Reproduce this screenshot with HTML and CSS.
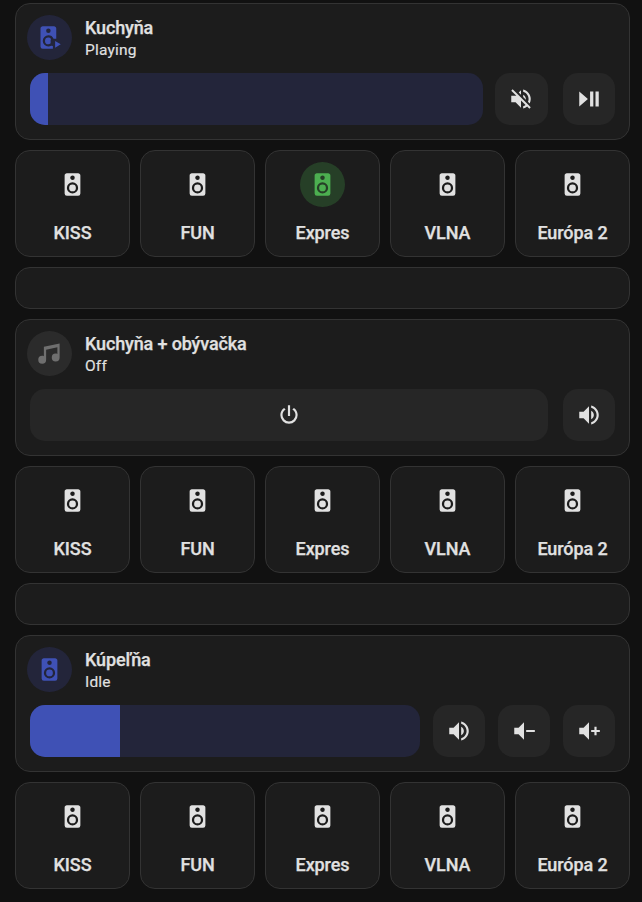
FILE: index.html
```html
<!DOCTYPE html>
<html lang="sk">
<head>
<meta charset="utf-8">
<title>Media</title>
<link rel="stylesheet" href="styles.css">
</head>
<body>
<svg class="defs" aria-hidden="true">
  <symbol id="speaker" viewBox="0 0 24 24"><path d="M12,12A3,3 0 0,0 9,15A3,3 0 0,0 12,18A3,3 0 0,0 15,15A3,3 0 0,0 12,12M12,20A5,5 0 0,1 7,15A5,5 0 0,1 12,10A5,5 0 0,1 17,15A5,5 0 0,1 12,20M12,4A2,2 0 0,1 14,6A2,2 0 0,1 12,8C10.89,8 10,7.1 10,6C10,4.89 10.89,4 12,4M17,2H7C5.89,2 5,2.89 5,4V20A2,2 0 0,0 7,22H17A2,2 0 0,0 19,20V4C19,2.89 18.1,2 17,2Z"/></symbol>
  <symbol id="speaker-play" viewBox="0 0 24 24"><path d="M11,12A3,3 0 0,0 8,15A3,3 0 0,0 11,18C11.7,18 12.4,17.7 13,17.2V14L13.5,13.4C12.9,12.5 12,12 11,12M11,20A5,5 0 0,1 6,15A5,5 0 0,1 11,10A5,5 0 0,1 15.6,13H18V4C18,2.89 17.1,2 16,2H6C4.89,2 4,2.89 4,4V20A2,2 0 0,0 6,22H15V19.5L13.6,19.3A5,5 0 0,1 11,20M11,4A2,2 0 0,1 13,6A2,2 0 0,1 11,8A2,2 0 0,1 9,6A2,2 0 0,1 11,4M17,15V21L22,18L17,15Z"/></symbol>
  <symbol id="music" viewBox="0 0 24 24"><path d="M21,3V15.5A3.5,3.5 0 0,1 17.5,19A3.5,3.5 0 0,1 14,15.5A3.5,3.5 0 0,1 17.5,12C18.04,12 18.55,12.12 19,12.34V6.47L9,8.6V17.5A3.5,3.5 0 0,1 5.5,21A3.5,3.5 0 0,1 2,17.5A3.5,3.5 0 0,1 5.5,14C6.04,14 6.55,14.12 7,14.34V6L21,3Z"/></symbol>
  <symbol id="volume" viewBox="0 0 24 24"><path d="M14,3.23V5.29C16.89,6.15 19,8.83 19,12C19,15.17 16.89,17.84 14,18.7V20.77C18,19.86 21,16.28 21,12C21,7.72 18,4.14 14,3.23M16.5,12C16.5,10.23 15.5,8.71 14,7.97V16C15.5,15.29 16.5,13.76 16.5,12M3,9V15H7L12,20V4L7,9H3Z"/></symbol>
  <symbol id="volume-off" viewBox="0 0 24 24"><path d="M12,4L9.91,6.09L12,8.18M4.27,3L3,4.27L7.73,9H3V15H7L12,20V13.27L16.25,17.53C15.58,18.04 14.83,18.46 14,18.7V20.77C15.38,20.45 16.63,19.82 17.68,18.96L19.73,21L21,19.73L12,10.73M19,12C19,12.94 18.8,13.82 18.46,14.64L19.97,16.15C20.62,14.91 21,13.5 21,12C21,7.72 18,4.14 14,3.23V5.29C16.89,6.15 19,8.83 19,12M16.5,12C16.5,10.23 15.5,8.71 14,7.97V10.18L16.45,12.63C16.5,12.43 16.5,12.21 16.5,12Z"/></symbol>
  <symbol id="volume-minus" viewBox="0 0 24 24"><path d="M3,9H7L12,4V20L7,15H3V9M14,11H22V13H14V11Z"/></symbol>
  <symbol id="volume-plus" viewBox="0 0 24 24"><path d="M3,9H7L12,4V20L7,15H3V9M14,11H17V8H19V11H22V13H19V16H17V13H14V11Z"/></symbol>
  <symbol id="play-pause" viewBox="0 0 24 24"><path d="M3,5V19L11,12M13,19H16V5H13M18,5V19H21V5"/></symbol>
  <symbol id="power" viewBox="0 0 24 24"><path d="M16.56,5.44L15.11,6.89C16.84,7.94 18,9.83 18,12A6,6 0 0,1 12,18A6,6 0 0,1 6,12C6,9.83 7.16,7.94 8.88,6.88L7.44,5.44C5.36,6.88 4,9.28 4,12A8,8 0 0,0 12,20A8,8 0 0,0 20,12C20,9.28 18.64,6.88 16.56,5.44M13,3H11V13H13"/></symbol>
</svg>
<main class="stack">
  <section class="card player">
    <header class="head">
      <span class="badge blue"><svg><use href="#speaker-play"/></svg></span>
      <div><h2 class="name">Kuchyňa</h2><p class="state">Playing</p></div>
    </header>
    <div class="controls">
      <div class="slider"><div class="fill" style="width:4%"></div></div>
      <button class="btn wide-gap"><svg><use href="#volume-off"/></svg></button>
      <button class="btn"><svg><use href="#play-pause"/></svg></button>
    </div>
  </section>
  <div class="stations">
    <div class="card station"><span class="badge"><svg><use href="#speaker"/></svg></span><span class="label">KISS</span></div>
    <div class="card station"><span class="badge"><svg><use href="#speaker"/></svg></span><span class="label">FUN</span></div>
    <div class="card station"><span class="badge green"><svg><use href="#speaker"/></svg></span><span class="label">Expres</span></div>
    <div class="card station"><span class="badge"><svg><use href="#speaker"/></svg></span><span class="label">VLNA</span></div>
    <div class="card station"><span class="badge"><svg><use href="#speaker"/></svg></span><span class="label">Európa 2</span></div>
  </div>
  <div class="card spacer"></div>
  <section class="card player">
    <header class="head">
      <span class="badge grey"><svg><use href="#music"/></svg></span>
      <div><h2 class="name">Kuchyňa + obývačka</h2><p class="state">Off</p></div>
    </header>
    <div class="controls off">
      <button class="btn power"><svg><use href="#power"/></svg></button>
      <button class="btn"><svg><use href="#volume"/></svg></button>
    </div>
  </section>
  <div class="stations">
    <div class="card station"><span class="badge"><svg><use href="#speaker"/></svg></span><span class="label">KISS</span></div>
    <div class="card station"><span class="badge"><svg><use href="#speaker"/></svg></span><span class="label">FUN</span></div>
    <div class="card station"><span class="badge"><svg><use href="#speaker"/></svg></span><span class="label">Expres</span></div>
    <div class="card station"><span class="badge"><svg><use href="#speaker"/></svg></span><span class="label">VLNA</span></div>
    <div class="card station"><span class="badge"><svg><use href="#speaker"/></svg></span><span class="label">Európa 2</span></div>
  </div>
  <div class="card spacer"></div>
  <section class="card player">
    <header class="head">
      <span class="badge blue"><svg><use href="#speaker"/></svg></span>
      <div><h2 class="name">Kúpeľňa</h2><p class="state">Idle</p></div>
    </header>
    <div class="controls idle">
      <div class="slider"><div class="fill" style="width:23.1%"></div></div>
      <button class="btn"><svg><use href="#volume"/></svg></button>
      <button class="btn"><svg><use href="#volume-minus"/></svg></button>
      <button class="btn"><svg><use href="#volume-plus"/></svg></button>
    </div>
  </section>
  <div class="stations">
    <div class="card station"><span class="badge"><svg><use href="#speaker"/></svg></span><span class="label">KISS</span></div>
    <div class="card station"><span class="badge"><svg><use href="#speaker"/></svg></span><span class="label">FUN</span></div>
    <div class="card station"><span class="badge"><svg><use href="#speaker"/></svg></span><span class="label">Expres</span></div>
    <div class="card station"><span class="badge"><svg><use href="#speaker"/></svg></span><span class="label">VLNA</span></div>
    <div class="card station"><span class="badge"><svg><use href="#speaker"/></svg></span><span class="label">Európa 2</span></div>
  </div>
</main>
</body>
</html>
```
FILE: styles.css
```css
* { box-sizing: border-box; }
body {
  margin: 0;
  background: #111111;
  color: #e1e1e1;
  font-family: Roboto, sans-serif;
}
.defs { display: none; }
.stack {
  display: flex;
  flex-direction: column;
  gap: 10px;
  padding: 3px 12px 0 15px;
}
.card {
  background: #1c1c1c;
  border: 1px solid #333333;
  border-radius: 15px;
}
.player {
  height: 137px;
  padding: 11px 14px 0 11px;
}
.head {
  display: flex;
  align-items: center;
  gap: 13px;
  height: 45px;
}
.badge {
  display: flex;
  align-items: center;
  justify-content: center;
  flex: none;
  width: 45px;
  height: 45px;
  border-radius: 50%;
}
.badge svg { width: 27px; height: 27px; fill: currentColor; }
.blue { background: #23253a; color: #3f51b5; }
.grey { background: #2b2b2b; color: #6f6f6f; }
.green { background: #263f27; color: #4caf50; }
.name {
  margin: 0;
  font-size: 18px;
  line-height: 23px;
  font-weight: 500;
  letter-spacing: -0.14px;
  -webkit-text-stroke: 0.25px currentColor;
}
.state {
  margin: 0 0 -1px;
  padding-top: 2px;
  font-size: 15.5px;
  line-height: 19px;
  letter-spacing: 0.2px;
  -webkit-text-stroke: 0.15px currentColor;
}
.controls {
  display: flex;
  gap: 15px;
  margin: 13px 0 0 3px;
}
.idle { gap: 13px; }
.slider {
  flex: 1;
  height: 52px;
  border-radius: 15px;
  background: #23253a;
  overflow: hidden;
}
.fill { height: 100%; background: #3f51b5; }
.btn {
  display: flex;
  align-items: center;
  justify-content: center;
  flex: none;
  width: 52px;
  height: 52px;
  padding: 0;
  border: 0;
  border-radius: 15px;
  background: #262626;
  color: #e1e1e1;
}
.btn svg { width: 26px; height: 26px; fill: currentColor; }
.wide-gap { margin-left: -3px; width: 53px; padding-right: 1px; }
.power { flex: 1; }
.stations {
  display: grid;
  grid-template-columns: repeat(5, 1fr);
  gap: 10px;
}
.station {
  display: flex;
  flex-direction: column;
  align-items: center;
  height: 107px;
  padding-top: 11px;
}
.label {
  margin-top: 14px;
  font-size: 18px;
  line-height: 23px;
  font-weight: 500;
  letter-spacing: -0.1px;
  -webkit-text-stroke: 0.25px currentColor;
}
.spacer { height: 42px; }
```
